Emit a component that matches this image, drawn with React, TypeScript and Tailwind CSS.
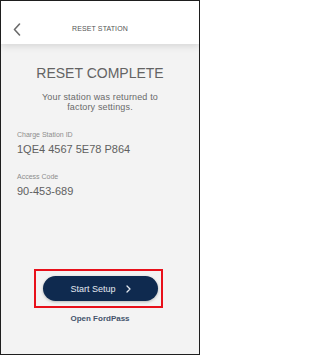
import React from "react";

export default function App() {
  const font = { fontFamily: '"Liberation Sans", Arial, sans-serif' };
  return (
    <div className="w-[200px] h-[355px] border border-[#1e1e1e] bg-[#f3f3f3] flex flex-col overflow-hidden" style={font}>
      <div className="relative z-10 h-[43px] bg-white shadow-[0_2px_7px_rgba(0,0,0,0.13)] flex items-start pt-[16px]">
        <div className="relative w-full h-[24px] flex items-center justify-center">
          <svg className="absolute left-[11px] top-[6px]" width="10" height="13" viewBox="0 0 10 13" fill="none">
            <path d="M7.5 1 L2.5 6.5 L7.5 12" stroke="#6b6b6b" strokeWidth="1.6" strokeLinecap="round" strokeLinejoin="round" />
          </svg>
          <span className="text-[7px] text-[#555] tracking-[0.1px]">RESET STATION</span>
        </div>
      </div>
      <div className="flex flex-col">
        <div className="mt-[21px] text-center text-[14px] leading-[16px] text-[#636363]">RESET COMPLETE</div>
        <div className="mt-[11px] text-center text-[9px] leading-[10px] text-[#6a6a6a] tracking-[0.15px]">
          Your station was returned to
          <br />
          factory settings.
        </div>
        <div className="pl-[16px] flex flex-col">
          <div className="mt-[18px] text-[7px] leading-[9px] text-[#8d8d8d]">Charge Station ID</div>
          <div className="mt-[4px] text-[11px] leading-[13px] text-[#606060]">1QE4 4567 5E78 P864</div>
          <div className="mt-[16px] text-[7px] leading-[9px] text-[#8d8d8d]">Access Code</div>
          <div className="mt-[4px] text-[11px] leading-[13px] text-[#606060]">90-453-689</div>
        </div>
        <div className="mt-[71px] flex flex-col items-center">
          <div className="ml-[-3px] border-2 border-[#e8101a] pl-[7px] pr-[3px] py-[5px] flex">
            <div className="w-[115px] h-[25px] rounded-full bg-[#0f2a4f] shadow-[0_1px_3px_rgba(0,0,0,0.25)] flex items-center justify-center gap-[10px]">
              <span className="text-[9px] leading-[10px] text-[#e4e9f0]">Start Setup</span>
              <svg width="5" height="8" viewBox="0 0 5 8" fill="none">
                <path d="M1 1 L4 4 L1 7" stroke="#e4e9f0" strokeWidth="1.3" strokeLinecap="round" strokeLinejoin="round" />
              </svg>
            </div>
          </div>
          <div className="mt-[6px] text-[8px] leading-[10px] font-bold text-[#44546c]">Open FordPass</div>
        </div>
      </div>
    </div>
  );
}
